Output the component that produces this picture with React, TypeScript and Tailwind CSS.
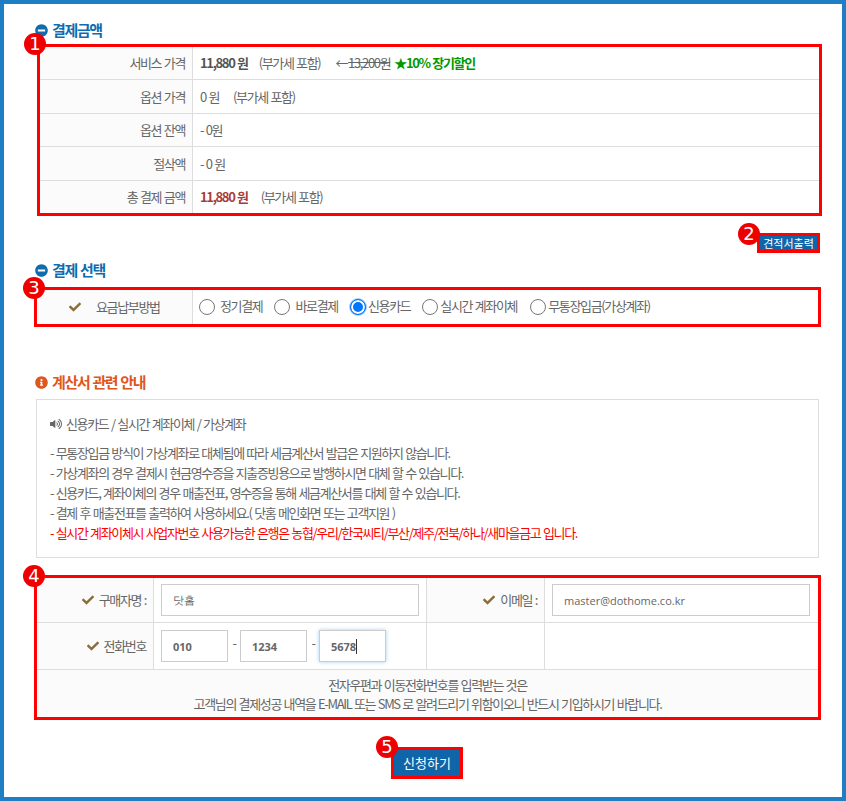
import { FaCheck, FaInfoCircle, FaMinusCircle, FaVolumeUp } from "react-icons/fa";

const Badge = ({ n, className }: { n: number; className: string }) => (
  <span
    className={`absolute z-10 flex h-[22px] w-[22px] items-center justify-center rounded-full bg-[#ee0000] font-['DejaVu_Sans',sans-serif] text-[18px] leading-none tracking-normal text-white ${className}`}
  >
    {n}
  </span>
);

const PriceRow = ({
  label,
  children,
  last,
  height,
}: {
  label: string;
  children: React.ReactNode;
  last?: boolean;
  height: string;
}) => (
  <div className={`flex ${height} ${last ? "" : "border-b border-[#dddddd]"}`}>
    <div className="flex w-[153px] shrink-0 items-center justify-end border-r border-[#dddddd] bg-[#fbfbfb] pr-[7px]">
      {label}
    </div>
    <div className="flex items-center pl-[7px]">{children}</div>
  </div>
);

const Radio = ({
  label,
  checked,
  gap,
  className = "",
}: {
  label: string;
  checked?: boolean;
  gap: string;
  className?: string;
}) => (
  <label className={`flex items-center ${className}`}>
    <input
      type="radio"
      name="pay"
      defaultChecked={checked}
      className={
        checked
          ? "m-0 h-4 w-4 appearance-none rounded-full border border-[#0075ff] bg-[#0075ff] shadow-[inset_0_0_0_2px_#ffffff,0_0_0_1px_#a9cff8]"
          : "m-0 h-4 w-4"
      }
    />
    <span className={`mb-[3px] ${gap}`}>{label}</span>
  </label>
);

const Label = ({ children }: { children: React.ReactNode }) => (
  <span className="flex items-center justify-end gap-[5px]">
    <FaCheck className="text-[12px] text-[#8a6d3b]" />
    {children}
  </span>
);

const inputClass =
  "h-[32px] border border-[#cccccc] bg-white pl-[11px] font-['Open_Sans',sans-serif] text-[11px] tracking-normal text-[#666666] outline-none";

export default function App() {
  return (
    <div className="box-border h-[801px] w-[846px] border-4 border-[#1f7fc4] bg-white pl-[33px] font-['Noto_Sans_CJK_KR',sans-serif] text-[13px] tracking-[-1.35px] text-[#666666] [word-spacing:1px]">
      <div className="flex w-[785px] flex-col">
        <h2 className="-ml-[2px] mt-[16px] flex h-[20px] items-center gap-[4px] text-[15px] font-bold text-[#0f6cb0]">
          <FaMinusCircle className="text-[13px]" />
          결제금액
        </h2>

        <div className="relative mt-[4px] h-[172px] border-[3px] border-[#ff0000]">
          <Badge n={1} className="-left-[16px] -top-[14px]" />
          <PriceRow label="서비스 가격" height="h-[33px]">
            <b className="text-[#555555]">11,880 원</b>
            <span className="ml-[11px]">(부가세 포함)</span>
            <span className="ml-[15px]">←</span>
            <s className="ml-[1px]">13,200원</s>
            <b className="ml-[4px] text-[#009900]">★10% 장기할인</b>
          </PriceRow>
          <PriceRow label="옵션 가격" height="h-[34px]">
            0 원<span className="ml-[14px]">(부가세 포함)</span>
          </PriceRow>
          <PriceRow label="옵션 잔액" height="h-[33px]">
            - 0원
          </PriceRow>
          <PriceRow label="절삭액" height="h-[34px]">
            - 0 원
          </PriceRow>
          <PriceRow label="총 결제 금액" height="h-[32px]" last>
            <b className="text-[#a83c3c]">11,880 원</b>
            <span className="ml-[13px]">(부가세 포함)</span>
          </PriceRow>
        </div>

        <div className="relative mr-[2px] mt-[17px] self-end">
          <Badge n={2} className="-left-[19px] -top-[10px]" />
          <button className="flex h-[20px] w-[63px] items-center justify-center border-[3px] border-[#ff0000] bg-[#0f65a8] text-[11px] tracking-normal text-white">
            견적서출력
          </button>
        </div>

        <h2 className="-ml-[2px] mt-[7px] flex h-[20px] items-center gap-[4px] text-[15px] font-bold text-[#0f6cb0]">
          <FaMinusCircle className="text-[13px]" />
          결제 선택
        </h2>

        <div className="relative -ml-[3px] mt-[7px] flex h-[40px] w-[787px] border-[3px] border-[#ff0000]">
          <Badge n={3} className="-left-[14px] -top-[13px]" />
          <div className="flex w-[156px] shrink-0 items-center border-r border-[#dddddd] bg-[#fbfbfb] pl-[32px]">
            <FaCheck className="text-[12px] text-[#8a6d3b]" />
            <span className="ml-[15px]">요금납부방법</span>
          </div>
          <div className="flex items-center gap-[12px] pl-[6px]">
            <Radio label="정기결제" gap="ml-[5px]" />
            <Radio label="바로결제" gap="ml-[5px]" />
            <Radio label="신용카드" checked gap="ml-[2px]" />
            <Radio label="실시간 계좌이체" gap="ml-[2px]" />
            <Radio label="무통장입금(가상계좌)" gap="ml-[2px]" className="ml-[1px]" />
          </div>
        </div>

        <h2 className="-ml-[2px] mt-[45px] flex h-[20px] items-center gap-[4px] text-[15px] font-bold text-[#e0561f]">
          <FaInfoCircle className="text-[13px]" />
          계산서 관련 안내
        </h2>

        <div className="-ml-[1px] mt-[7px] h-[159px] w-[783px] border border-[#dddddd] px-[13px] pt-[14px]">
          <p className="flex h-[20px] items-center gap-[4px]">
            <FaVolumeUp className="text-[12px]" />
            신용카드 / 실시간 계좌이체 / 가상계좌
          </p>
          <ul className="mt-[9px] leading-[20px]">
            <li>- 무통장입금 방식이 가상계좌로 대체됨에 따라 세금계산서 발급은 지원하지 않습니다.</li>
            <li>- 가상계좌의 경우 결제시 현금영수증을 지출증빙용으로 발행하시면 대체 할 수 있습니다.</li>
            <li>- 신용카드, 계좌이체의 경우 매출전표, 영수증을 통해 세금계산서를 대체 할 수 있습니다.</li>
            <li>- 결제 후 매출전표를 출력하여 사용하세요.( 닷홈 메인화면 또는 고객지원 )</li>
            <li className="text-[#ff0000]">
              - 실시간 계좌이체시 사업자번호 사용가능한 은행은 농협/우리/한국씨티/부산/제주/전북/하나/새마을금고 입니다.
            </li>
          </ul>
        </div>

        <div className="relative -ml-[3px] mt-[17px] h-[145px] w-[787px] border-[3px] border-[#ff0000]">
          <Badge n={4} className="-left-[14px] -top-[13px]" />
          <div className="flex h-[45px] border-b border-[#dddddd]">
            <div className="flex w-[117px] shrink-0 items-center justify-end border-r border-[#dddddd] bg-[#fbfbfb] pr-[7px]">
              <Label>구매자명 :</Label>
            </div>
            <div className="flex w-[273px] shrink-0 items-center border-r border-[#dddddd] pl-[7px]">
              <input readOnly value="닷홈" className={`${inputClass} w-[258px]`} />
            </div>
            <div className="flex w-[118px] shrink-0 items-center justify-end border-r border-[#dddddd] bg-[#fbfbfb] pr-[7px]">
              <Label>이메일 :</Label>
            </div>
            <div className="flex flex-1 items-center pl-[7px]">
              <input readOnly value="master@dothome.co.kr" className={`${inputClass} w-[258px]`} />
            </div>
          </div>
          <div className="flex h-[47px] border-b border-[#dddddd]">
            <div className="flex w-[117px] shrink-0 items-center justify-end border-r border-[#dddddd] bg-[#fbfbfb] pr-[7px]">
              <Label>전화번호</Label>
            </div>
            <div className="flex w-[273px] shrink-0 items-center border-r border-[#dddddd] pl-[7px]">
              <input readOnly value="010" className={`${inputClass} w-[67px] font-bold`} />
              <span className="mb-[6px] w-[12px] text-center">-</span>
              <input readOnly value="1234" className={`${inputClass} w-[67px] font-bold`} />
              <span className="mb-[6px] w-[12px] text-center">-</span>
              <span className="relative">
                <input
                  readOnly
                  value="5678"
                  className={`${inputClass} w-[67px] border-[#7ab5e8] font-bold shadow-[0_0_4px_#a8d0f0]`}
                />
                <span className="absolute left-[37px] top-[9px] h-[15px] w-px bg-[#333333]" />
              </span>
            </div>
            <div className="w-[118px] shrink-0 border-r border-[#dddddd]" />
          </div>
          <div className="flex h-[47px] flex-col items-center justify-center bg-[#fbfbfb] leading-[19px]">
            <p>전자우편과 이동전화번호를 입력받는 것은</p>
            <p>고객님의 결제성공 내역을 E-MAIL 또는 SMS 로 알려드리기 위함이오니 반드시 기입하시기 바랍니다.</p>
          </div>
        </div>

        <div className="relative ml-[354px] mt-[27px] w-[72px]">
          <Badge n={5} className="-left-[15px] -top-[11px]" />
          <button className="h-[32px] w-[72px] border-[3px] border-[#ff0000] bg-[#0f65a8] text-[13px] tracking-normal text-white">
            신청하기
          </button>
        </div>
      </div>
    </div>
  );
}
